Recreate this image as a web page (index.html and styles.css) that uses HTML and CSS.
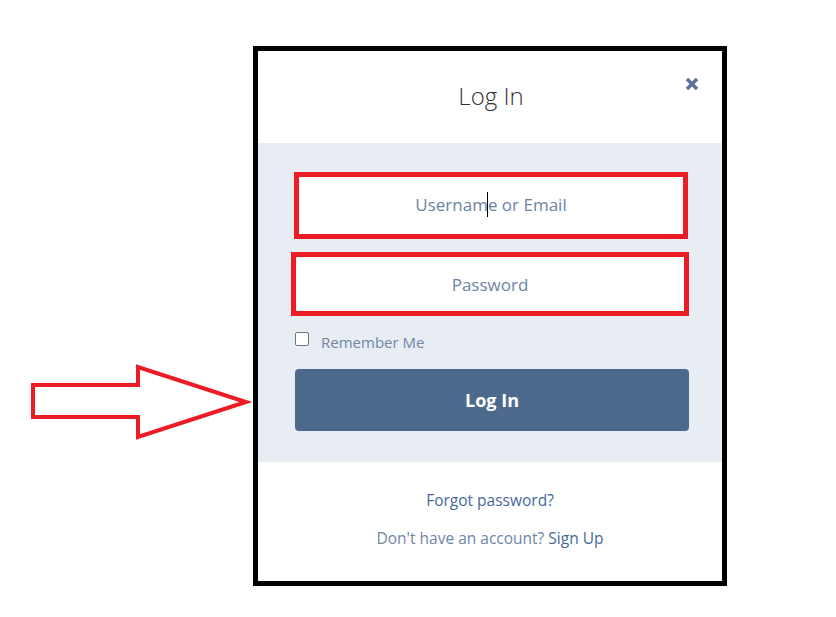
FILE: index.html
```html
<!DOCTYPE html>
<html>
<head>
<meta charset="utf-8">
<link rel="stylesheet" href="styles.css">
</head>
<body>
<div class="page">
  <svg class="arrow" width="260" height="90" viewBox="0 0 260 90">
    <polygon points="33,35 138,35 138,17 246,52 138,87 138,67 33,67" fill="none" stroke="#ed1c24" stroke-width="4" stroke-linejoin="miter"/>
  </svg>
  <div class="modal">
    <div class="header">
      <h1 class="title">Log In</h1>
      <svg class="close" width="14" height="14" viewBox="0 0 14 14">
        <path d="M2 2 L12 12 M12 2 L2 12" stroke="#5c7397" stroke-width="3.6" stroke-linecap="butt"/>
      </svg>
    </div>
    <div class="form">
      <div class="field field-user"><span class="ph">Username<span class="caret"></span> or Email</span></div>
      <div class="field field-pass"><span class="ph">Password</span></div>
      <label class="remember"><span class="box"></span>Remember Me</label>
      <div class="btn">Log In</div>
    </div>
    <div class="footer">
      <a class="link">Forgot password?</a>
      <p class="signup">Don't have an account? <a class="link">Sign Up</a></p>
    </div>
  </div>
</div>
</body>
</html>
```

FILE: styles.css
```css
html, body {
  margin: 0;
  padding: 0;
  background: #fff;
}
body {
  font-family: "Open Sans", "Noto Sans", sans-serif;
}
.page {
  position: relative;
  width: 836px;
  height: 617px;
  padding: 46px 0 0 253px;
  box-sizing: border-box;
}
.arrow {
  position: absolute;
  left: 0;
  top: 350px;
}
.modal {
  width: 474px;
  height: 540px;
  box-sizing: border-box;
  border: 5px solid #000;
  display: flex;
  flex-direction: column;
  background: #fff;
}
.header {
  position: relative;
  height: 92px;
  display: flex;
  align-items: center;
  justify-content: center;
  flex-shrink: 0;
}
.title {
  margin: 0;
  font-size: 24px;
  font-weight: 300;
  color: #333;
  padding-left: 2px;
  padding-bottom: 4px;
}
.close {
  position: absolute;
  right: 23px;
  top: 26px;
}
.form {
  background: #e8ecf3;
  height: 319px;
  box-sizing: border-box;
  padding: 29px 33px 0 36px;
  display: flex;
  flex-direction: column;
  flex-shrink: 0;
}
.field {
  background: #fff;
  border: 5px solid #ed1c24;
  box-sizing: border-box;
  display: flex;
  align-items: center;
  justify-content: center;
}
.field-user {
  height: 67px;
  margin: 0 1px 0 0;
}
.field-pass {
  height: 64px;
  margin: 13px 0 0 -3px;
}
.ph {
  position: relative;
  font-size: 17px;
  color: #6e83a3;
}
.caret {
  display: inline-block;
  width: 1px;
  height: 25px;
  background: #000;
  vertical-align: middle;
  margin: 0 -1px 0 0;
  position: relative;
  left: -10px;
  top: -1px;
}
.remember {
  display: flex;
  align-items: center;
  margin-top: 18px;
  height: 16px;
  font-size: 15px;
  color: #7086a6;
}
.box {
  width: 12px;
  height: 12px;
  border: 1px solid #767676;
  border-radius: 2px;
  background: #fff;
  margin: 0 12px 0 1px;
  position: relative;
  top: -3px;
}
.btn {
  margin-top: 19px;
  margin-left: 1px;
  height: 62px;
  border-radius: 4px;
  background: #4d6a8d;
  color: #fff;
  font-weight: 700;
  font-size: 18px;
  display: flex;
  align-items: center;
  justify-content: center;
}
.footer {
  flex: 1;
  display: flex;
  flex-direction: column;
  align-items: center;
  padding-top: 27px;
  font-size: 15.5px;
}
.link {
  color: #46689c;
}
.signup {
  margin: 16px 0 0;
  color: #7086a6;
}
```
